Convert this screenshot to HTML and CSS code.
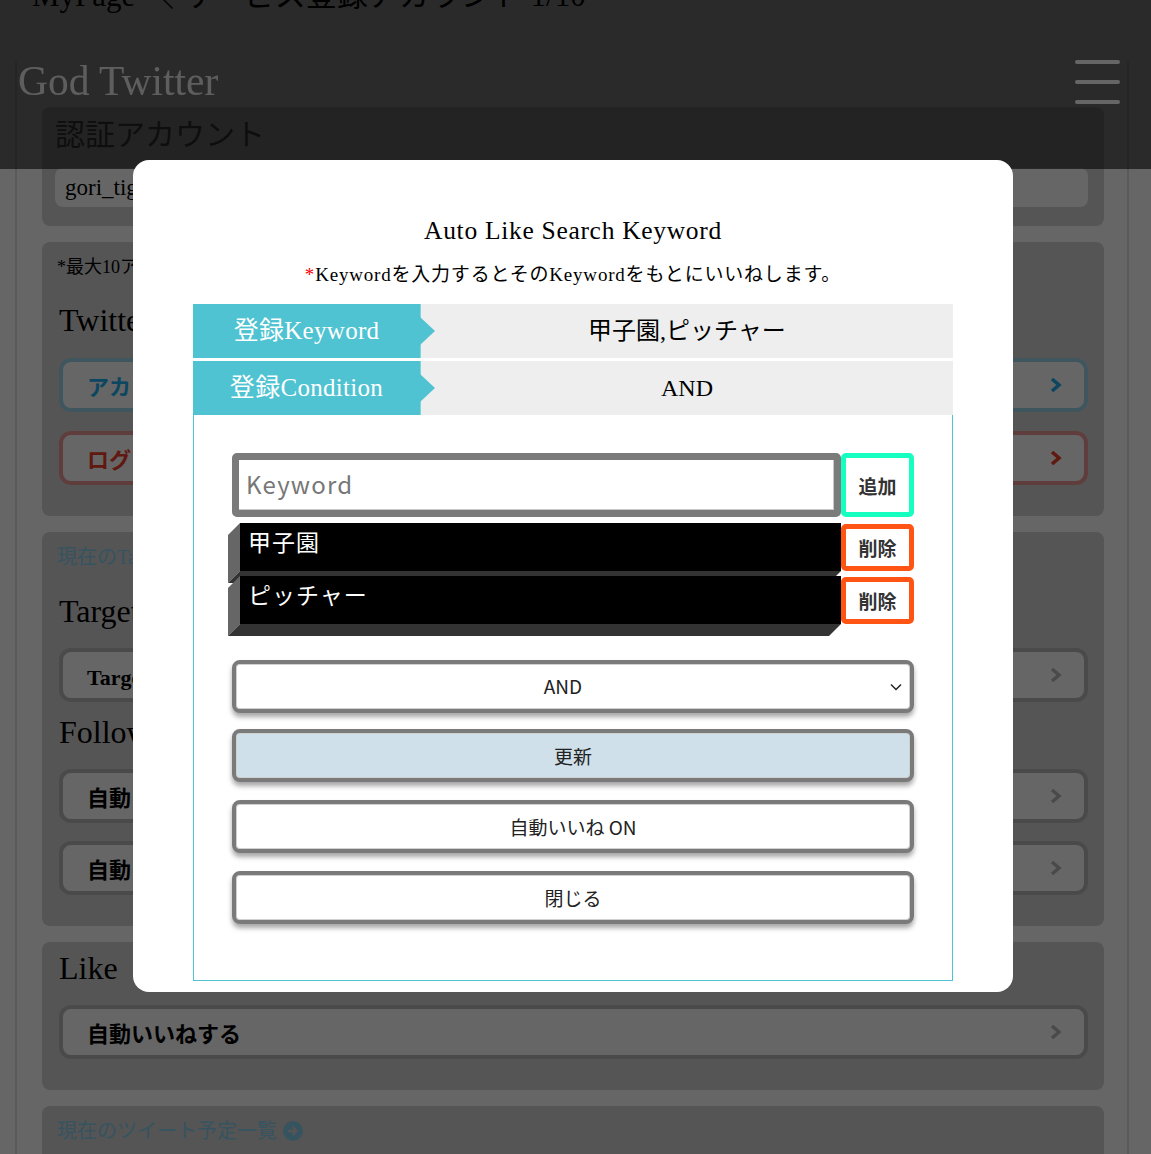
FILE: index.html
```html
<!DOCTYPE html>
<html lang="ja">
<head>
<meta charset="utf-8">
<title>Auto Like Search Keyword</title>
<link rel="stylesheet" href="styles.css">
</head>
<body>
<div class="page">
  <p class="crumb">MyPage ＼ サービス登録アカウント 1/10</p>
  <div class="frame">
    <section class="card card-auth">
      <h2 class="card-title">認証アカウント</h2>
      <div class="account-field">gori_tiger_jp</div>
    </section>

    <section class="card">
      <p class="note">*最大10アカウントまで登録できます</p>
      <h3 class="sec-title">Twitterアカウント</h3>
      <a class="pbtn pbtn-blue">アカウント追加<svg class="chev" viewBox="0 0 12 14"><path d="M2 1 L9 7 L2 13" /></svg></a>
      <a class="pbtn pbtn-red">ログアウト<svg class="chev" viewBox="0 0 12 14"><path d="M2 1 L9 7 L2 13" /></svg></a>
    </section>

    <section class="card">
      <p class="link">現在のTargetアカウント一覧</p>
      <h3 class="sec-title sec-after-link">Target</h3>
      <a class="pbtn">Targetアカウント設定<svg class="chev" viewBox="0 0 12 14"><path d="M2 1 L9 7 L2 13" /></svg></a>
      <h3 class="sec-title sec-after-btn">Follow</h3>
      <a class="pbtn">自動フォローする<svg class="chev" viewBox="0 0 12 14"><path d="M2 1 L9 7 L2 13" /></svg></a>
      <a class="pbtn pbtn-next">自動フォロー解除する<svg class="chev" viewBox="0 0 12 14"><path d="M2 1 L9 7 L2 13" /></svg></a>
    </section>

    <section class="card card-like">
      <h3 class="sec-title">Like</h3>
      <a class="pbtn">自動いいねする<svg class="chev" viewBox="0 0 12 14"><path d="M2 1 L9 7 L2 13" /></svg></a>
    </section>

    <section class="card card-last">
      <p class="link">現在のツイート予定一覧 <svg class="circle-arrow" viewBox="0 0 20 20"><circle cx="10" cy="10" r="10"/><path d="M5 10 H13 M9.5 6 L13.5 10 L9.5 14" /></svg></p>
    </section>
  </div>
</div>

<header class="topbar">
  <h1 class="brand">God Twitter</h1>
  <span class="burger"><i></i><i></i><i></i></span>
</header>

<div class="overlay"></div>

<div class="modal">
  <h2 class="modal-title">Auto Like Search Keyword</h2>
  <p class="modal-sub"><span class="req">*</span>Keywordを入力するとそのKeywordをもとにいいねします。</p>

  <div class="info-row">
    <div class="info-label">登録Keyword</div>
    <div class="info-value">甲子園,ピッチャー</div>
  </div>
  <div class="info-row">
    <div class="info-label">登録Condition</div>
    <div class="info-value">AND</div>
  </div>

  <div class="edit-box">
    <div class="input-row">
      <div class="kw-input">Keyword</div>
      <button class="tag-btn tag-add">追加</button>
    </div>
    <div class="kw-row">
      <div class="kw-item">甲子園</div>
      <button class="tag-btn tag-del">削除</button>
    </div>
    <div class="kw-row kw-row-next">
      <div class="kw-item">ピッチャー</div>
      <button class="tag-btn tag-del">削除</button>
    </div>

    <div class="mbtn mselect">AND<svg class="sel-chev" viewBox="0 0 12 8"><path d="M1 1.5 L6 6.5 L11 1.5" /></svg></div>
    <button class="mbtn mbtn-update">更新</button>
    <button class="mbtn">自動いいね ON</button>
    <button class="mbtn">閉じる</button>
  </div>
</div>
</body>
</html>
```

FILE: styles.css
```css
html, body {
  margin: 0;
  padding: 0;
}
body {
  background: #ffffff;
  font-family: "Liberation Serif", "Noto Sans CJK JP", serif;
  color: #000;
  width: 1151px;
  height: 1154px;
  overflow: hidden;
}

/* ---------- background page ---------- */
.page {
  height: 1154px;
  overflow: hidden;
}
.crumb {
  margin: -22px 0 0 32px;
  font-size: 31px;
  line-height: 36px;
  height: 36px;
  color: #000;
}
.frame {
  margin: 48px 22px 0 15px;
  border-left: 2px solid #e0e0e0;
  border-right: 2px solid #e0e0e0;
  padding: 45px 23px 40px 25px;
  display: flex;
  flex-direction: column;
  gap: 16px;
}
.card {
  background: #d4d4d4;
  border-radius: 8px;
  padding: 12px 16px 31px 15px;
  display: flex;
  flex-direction: column;
}
.card-auth {
  padding: 10px 16px 19px 13px;
}
.card-title {
  margin: 0;
  font-size: 30px;
  line-height: 36px;
  font-weight: normal;
  color: #555;
}
.account-field {
  margin-top: 15px;
  height: 39px;
  background: #fff;
  border-radius: 8px;
  padding-left: 10px;
  font-size: 23px;
  line-height: 39px;
}
.note {
  margin: 0;
  font-size: 18px;
  line-height: 26px;
}
.sec-title {
  margin: 20px 0 0 2px;
  font-size: 32px;
  line-height: 40px;
  font-weight: normal;
}
.sec-after-link {
  margin-top: 21px;
}
.sec-after-btn {
  margin-top: 10px;
}
.card-like {
  padding-top: 6px;
}
.card-like .sec-title {
  margin-top: 0;
}
.card-last {
  padding-bottom: 30px;
}
.link {
  margin: 0;
  font-size: 20px;
  line-height: 26px;
  color: #88d0f0;
  display: flex;
  align-items: center;
  gap: 6px;
}
.circle-arrow {
  width: 20px;
  height: 20px;
}
.circle-arrow circle {
  fill: #88d0f0;
}
.circle-arrow path {
  fill: none;
  stroke: #d4d4d4;
  stroke-width: 2.4;
}
.pbtn {
  box-sizing: border-box;
  height: 54px;
  margin-top: 17px;
  margin-left: 2px;
  border: 4px solid #bababa;
  border-radius: 12px;
  background: #fff;
  display: flex;
  align-items: center;
  justify-content: space-between;
  padding: 0 22px 0 24px;
  font-size: 22px;
  font-weight: bold;
  color: #000;
}
.pbtn .chev {
  width: 12px;
  height: 14px;
}
.pbtn .chev path {
  fill: none;
  stroke: #bababa;
  stroke-width: 3.5;
}
.pbtn-next {
  margin-top: 18px;
}
.pbtn-blue {
  margin-top: 18px;
  border-color: #9ed6ee;
  color: #22aef0;
}
.pbtn-blue .chev path {
  stroke: #22aef0;
}
.pbtn-red {
  margin-top: 19px;
  border-color: #ee9a98;
  color: #f23c28;
}
.pbtn-red .chev path {
  stroke: #f23c28;
}

/* ---------- fixed header ---------- */
.topbar {
  position: fixed;
  top: 0;
  left: 0;
  right: 0;
  height: 169px;
  background: rgba(0, 0, 0, 0.59);
  display: flex;
  justify-content: space-between;
  align-items: flex-start;
  z-index: 10;
}
.brand {
  margin: 57px 0 0 18px;
  font-size: 41.5px;
  line-height: 48px;
  font-weight: normal;
  color: #ebebeb;
}
.burger {
  margin: 60px 31px 0 0;
  width: 45px;
  display: flex;
  flex-direction: column;
  gap: 16px;
}
.burger i {
  display: block;
  height: 4px;
  border-radius: 2px;
  background: #fff;
}

/* ---------- overlay + modal ---------- */
.overlay {
  position: fixed;
  inset: 0;
  background: rgba(0, 0, 0, 0.6);
  z-index: 20;
}
.modal {
  position: fixed;
  left: 133px;
  top: 160px;
  width: 880px;
  height: 832px;
  box-sizing: border-box;
  background: #fff;
  border-radius: 16px;
  padding: 0 60px;
  z-index: 30;
}
.modal-title {
  margin: 55px 0 0;
  text-align: center;
  font-size: 25.5px;
  line-height: 32px;
  font-weight: normal;
  letter-spacing: 0.7px;
}
.modal-sub {
  margin: 15px 0 0;
  text-align: center;
  font-size: 19px;
  line-height: 26px;
  letter-spacing: 0.8px;
}
.req {
  color: #ff0000;
}
.info-row {
  display: flex;
  height: 54px;
  margin-top: 3px;
}
.info-row:first-of-type {
  margin-top: 16px;
}
.info-label {
  position: relative;
  width: 228px;
  background: #4fc3d1;
  color: #fff;
  font-size: 25px;
  line-height: 54px;
  text-align: center;
  border-right: 1px solid #80d4de;
  box-sizing: border-box;
  letter-spacing: 0.3px;
}
.info-label::after {
  content: "";
  position: absolute;
  left: 100%;
  top: 50%;
  transform: translateY(-50%);
  border-left: 15px solid #4fc3d1;
  border-top: 14px solid transparent;
  border-bottom: 14px solid transparent;
}
.info-value {
  flex: 1;
  background: #eeeeee;
  font-size: 24px;
  line-height: 54px;
  text-align: center;
}
.edit-box {
  border: 1px solid #4fc3d1;
  border-top: 0;
  height: 566px;
  box-sizing: border-box;
  padding: 38px 38px 0 38px;
  display: flex;
  flex-direction: column;
}
.input-row {
  display: flex;
  height: 64px;
}
.kw-input {
  flex: 1;
  box-sizing: border-box;
  border: 7px solid #7b7b7b;
  border-radius: 5px;
  box-shadow: inset -1px -1px 0 #c8c8c8;
  padding-left: 7px;
  font-family: "Noto Sans CJK JP", "Noto Sans", sans-serif;
  font-size: 24px;
  line-height: 48px;
  letter-spacing: 1.2px;
  color: #777;
}
.tag-btn {
  width: 73px;
  box-sizing: border-box;
  background: #fff;
  border-radius: 5px;
  font-family: "Noto Sans CJK JP", sans-serif;
  font-size: 19px;
  font-weight: bold;
  color: #333;
  padding: 0;
}
.tag-add {
  border: 5px solid #14ffc0;
}
.tag-del {
  border: 5px solid #ff5414;
  height: 47px;
  margin-top: 1px;
}
.kw-row {
  display: flex;
  height: 48px;
  margin-top: 6px;
}
.kw-row-next {
  margin-top: 5px;
}
.kw-item {
  position: relative;
  flex: 1;
  margin-left: 8px;
  background: #000;
  color: #fff;
  font-family: "Noto Sans CJK JP", sans-serif;
  font-size: 23px;
  line-height: 32px;
  padding: 2px 0 0 8px;
  letter-spacing: 1px;
}
.kw-item::before {
  content: "";
  position: absolute;
  left: -12px;
  top: 0;
  width: 12px;
  height: 100%;
  background: #666;
  transform-origin: right top;
  transform: skewY(-45deg);
}
.kw-item::after {
  content: "";
  position: absolute;
  left: 0;
  top: 100%;
  width: 100%;
  height: 12px;
  background: #333;
  transform-origin: left top;
  transform: skewX(-45deg);
}
.mbtn {
  box-sizing: border-box;
  width: 100%;
  height: 53px;
  margin-top: 18px;
  border: 4px solid #7a7a7a;
  border-radius: 8px;
  background: #fff;
  box-shadow: 0 4px 5px rgba(0, 0, 0, 0.35), inset 0 0 0 1px #d0d0d0;
  font-family: "Noto Sans CJK JP", sans-serif;
  font-size: 19px;
  color: #222;
  padding: 0;
}
.mselect {
  margin-top: 36px;
  position: relative;
  display: flex;
  align-items: center;
  justify-content: center;
  padding-right: 20px;
  padding-bottom: 3px;
}
.sel-chev {
  position: absolute;
  right: 8px;
  top: 50%;
  width: 12px;
  height: 8px;
  margin-top: -4px;
}
.sel-chev path {
  fill: none;
  stroke: #222;
  stroke-width: 1.5;
}
.mbtn-update {
  margin-top: 16px;
  background: #cfe0ea;
}
```
